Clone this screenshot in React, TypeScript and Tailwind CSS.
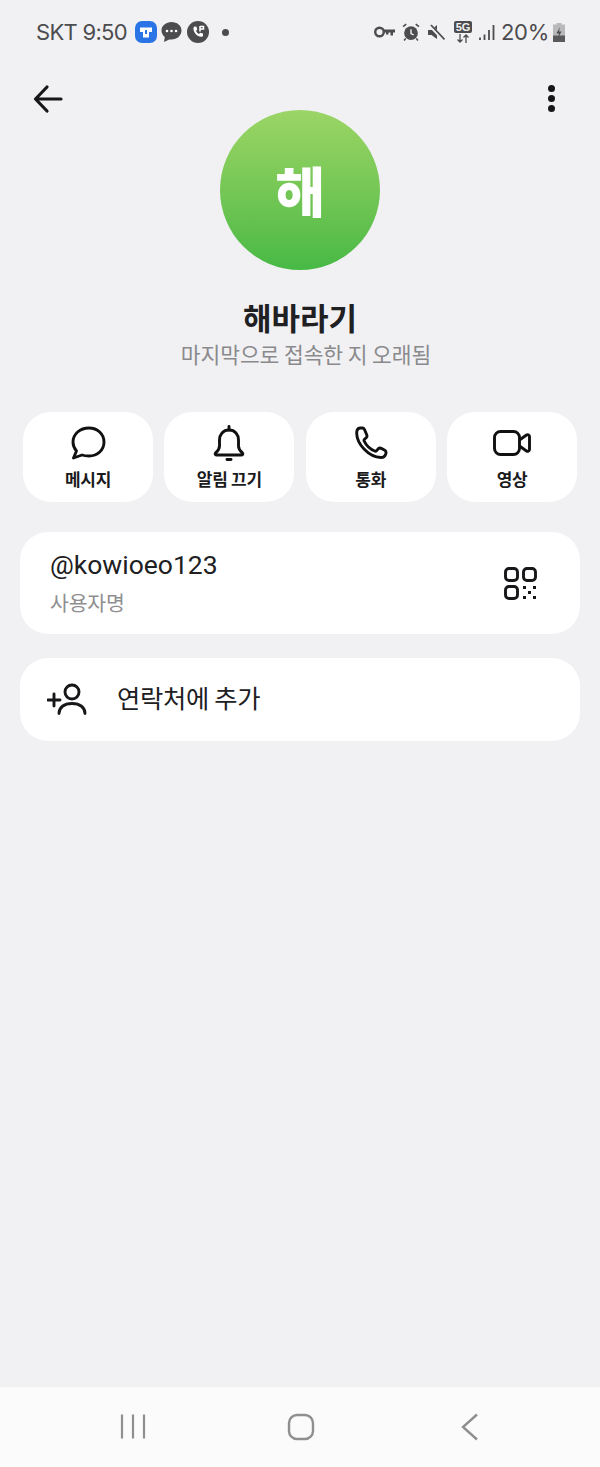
import { ReactNode } from "react";

const korean = "font-['Noto_Sans_CJK_KR','Noto_Sans',sans-serif]";

function ActionButton({ icon, label }: { icon: ReactNode; label: string }) {
    return (
        <div className="flex h-[90px] w-[130px] flex-col items-center rounded-[28px] bg-white pt-[13px]">
            <div className="flex h-[36px] items-center justify-center">{icon}</div>
            <span className="mt-[6px] text-[17px] leading-[24px] font-bold tracking-[-0.3px] text-[#1b1b1d]">
                {label}
            </span>
        </div>
    );
}

function StatusBar() {
    return (
        <div className="flex h-[64px] items-center justify-between pr-[35px] pl-[36px] text-[#4c4c4e]">
            <div className="flex items-center">
                <span className="font-['Inter',sans-serif] text-[22px] leading-none tracking-[-0.7px]">
                    SKT 9:50
                </span>
                <svg width="22" height="22" viewBox="0 0 22 22" className="ml-[8px]">
                    <rect x="0" y="0" width="22" height="22" rx="7" fill="#2b74e6" />
                    <path d="M5 6.500h12v4.500h-3v5.500h-6V11H5z" fill="#fff" />
                    <rect x="10" y="9" width="2" height="4" fill="#2b74e6" />
                </svg>
                <svg width="21" height="22" viewBox="0 0 21 22" className="ml-[4px]">
                    <path
                        d="M10.500 1C5 1 .5 4.600.5 9.500c0 2.600 1.300 4.900 3.300 6.400L3 21l5.200-2.600c.7.100 1.500.2 2.300.1 5.500 0 10-4 10-9S16 1 10.500 1z"
                        fill="#4c4c4e"
                    />
                    <circle cx="6" cy="10" r="1.300" fill="#fff" />
                    <circle cx="10.500" cy="10" r="1.300" fill="#fff" />
                    <circle cx="15" cy="10" r="1.300" fill="#fff" />
                </svg>
                <svg width="22" height="22" viewBox="0 0 22 22" className="ml-[5px]">
                    <circle cx="11" cy="11" r="11" fill="#4c4c4e" />
                    <path
                        d="M7.500 5.500l2 .2.8 3-1.300 1c.6 1.500 1.700 2.600 3 3.200l1.100-1.200 2.900.9v2.100c-.2.800-1 1.200-1.800 1.100-4.200-.5-7.300-3.700-7.800-8-.1-1.100.7-2.100 1.100-2.300z"
                        fill="#fff"
                    />
                    <path d="M13 5v5.500M13 5.500h3.500v2.500H13" stroke="#fff" strokeWidth="1.500" fill="none" />
                </svg>
                <span className="ml-[13px] h-[7px] w-[7px] rounded-full bg-[#4c4c4e]" />
            </div>
            <div className="flex items-center">
                <svg width="21" height="12" viewBox="0 0 21 12">
                    <circle cx="5.500" cy="6" r="4.300" fill="none" stroke="#4c4c4e" strokeWidth="2.400" />
                    <path d="M9.500 3.500H21v3h-2v3h-2.500v-3h-2v2H12v-2H9.500z" fill="#4c4c4e" />
                </svg>
                <svg width="18" height="18" viewBox="0 0 17 17" className="ml-[7px]">
                    <circle cx="8.500" cy="9.500" r="6.500" fill="#4c4c4e" />
                    <path d="M8.500 6v4l2.500 1.200" stroke="#f1f1f4" strokeWidth="1.300" fill="none" />
                    <path d="M1 3.500L4 1M16 3.500L13 1" stroke="#4c4c4e" strokeWidth="1.500" />
                    <path d="M3.500 14.500L2 16.500M13.500 14.500L15 16.500" stroke="#4c4c4e" strokeWidth="1.500" />
                </svg>
                <svg width="17" height="17" viewBox="0 0 17 17" className="ml-[8px]">
                    <path d="M0 6h3.500L9 1v14L3.500 11H0z" fill="#4c4c4e" />
                    <path d="M2 1.500L16 16" stroke="#f1f1f4" strokeWidth="3.500" />
                    <path d="M3 1L16.500 15.500" stroke="#4c4c4e" strokeWidth="1.800" />
                </svg>
                <div className="ml-[9px] flex flex-col items-center">
                    <div className="flex h-[12px] w-[18px] items-center justify-center rounded-[2px] bg-[#4c4c4e] font-['Liberation_Sans',sans-serif] text-[11px] leading-none font-bold text-[#f1f1f4]">
                        5G
                    </div>
                    <svg width="14" height="9" viewBox="0 0 14 9" className="mt-[1px]">
                        <path
                            d="M4 0v8M1.500 5.500L4 8l2.500-2.500M10 9V1M7.500 3.500L10 1l2.500 2.500"
                            stroke="#4c4c4e"
                            strokeWidth="1.300"
                            fill="none"
                        />
                    </svg>
                </div>
                <svg width="16" height="17" viewBox="0 0 16 17" className="ml-[7px]">
                    <path d="M1 13.500v2.500M5.500 10.500v5.500M10 6v10M14.500 1v15" stroke="#4c4c4e" strokeWidth="1.800" />
                </svg>
                <span className="ml-[6px] font-['Inter',sans-serif] text-[22px] leading-none tracking-[-0.3px]">
                    20%
                </span>
                <svg width="12" height="19" viewBox="0 0 12 19" className="ml-[4px]">
                    <path d="M3.500 0h5v1.500H12V19H0V1.500h3.500z" fill="#b9b9bb" />
                    <path d="M0 12.500h12V19H0z" fill="#5a5a5c" />
                    <path d="M7 4L3.500 10.500h2.500L5 15l3.500-6.500H6z" fill="#4c4c4e" />
                </svg>
            </div>
        </div>
    );
}

function NavBar() {
    return (
        <div className="flex h-[80px] items-start bg-[#fbfbfb] pt-[26px] pl-[120px]">
            <svg width="26" height="26" viewBox="0 0 26 26">
                <path d="M2 1.500v24M13 1.500v24M24 1.500v24" stroke="#8f8f8f" strokeWidth="2.200" />
            </svg>
            <svg width="28" height="28" viewBox="0 0 28 28" className="ml-[141px]">
                <rect x="2" y="2" width="24" height="24" rx="8" fill="none" stroke="#8f8f8f" strokeWidth="2.400" />
            </svg>
            <svg width="18" height="28" viewBox="0 0 18 28" className="ml-[146px]">
                <path d="M16 1.500L2 14l14 12.500" fill="none" stroke="#8f8f8f" strokeWidth="2.400" />
            </svg>
        </div>
    );
}

export default function App() {
    return (
        <div className={`flex h-[1467px] w-[600px] flex-col overflow-hidden bg-[#f1f1f4] ${korean}`}>
            <StatusBar />

            <div className="flex h-[68px] items-center justify-between pr-[45px] pl-[32px]">
                <svg width="32" height="30" viewBox="0 0 32 30" fill="none" stroke="#17171a" strokeWidth="3.200" strokeLinecap="round" strokeLinejoin="round" className="translate-y-[1px]">
                    <path d="M29 15H4M15 3L3.500 15 15 27" />
                </svg>
                <div className="flex flex-col gap-[3px]">
                    <span className="h-[7px] w-[7px] rounded-full bg-[#17171a]" />
                    <span className="h-[7px] w-[7px] rounded-full bg-[#17171a]" />
                    <span className="h-[7px] w-[7px] rounded-full bg-[#17171a]" />
                </div>
            </div>

            <div className="-mt-[22px] flex flex-col items-center">
                <div className="flex h-[160px] w-[160px] items-center justify-center rounded-full bg-gradient-to-b from-[#9bd566] to-[#47b945]">
                    <span className="text-[54px] leading-none font-black text-white">해</span>
                </div>
                <h1 className="mt-[26px] text-[31px] leading-[42px] font-bold tracking-[0px] text-[#202022]">
                    해바라기
                </h1>
                <p className="mt-[1px] pl-[12px] text-[21.500px] leading-[30px] tracking-[-0.100px] text-[#8a8a8c]">
                    마지막으로 접속한 지 오래됨
                </p>
            </div>

            <div className="mt-[43px] flex justify-between px-[23px]">
                <ActionButton
                    label="메시지"
                    icon={
                        <svg width="36" height="34" viewBox="0 0 36 34" fill="none" stroke="#111" strokeWidth="2.900" strokeLinejoin="round">
                            <path d="M19 2C10 2 3 8 3 16c0 3.500 1.300 6.500 3.500 9L3.500 32l8.500-3c2 .7 4.500 1 7 1 8.500 0 15-6 15-14S27.500 2 19 2z" />
                        </svg>
                    }
                />
                <ActionButton
                    label="알림 끄기"
                    icon={
                        <svg width="32" height="36" viewBox="0 0 32 36" fill="none" stroke="#111" strokeWidth="2.900" strokeLinejoin="round">
                            <path d="M16 5c-6 0-9.500 4.500-9.500 10v6c0 3-1.500 5-4 7-.7.700-.3 2 .8 2h25.400c1.100 0 1.500-1.300.8-2-2.500-2-4-4-4-7v-6C25.500 9.500 22 5 16 5z" />
                            <path d="M16 1.500V5" strokeLinecap="round" />
                            <path d="M14 34.500h4" strokeLinecap="round" />
                        </svg>
                    }
                />
                <ActionButton
                    label="통화"
                    icon={
                        <svg width="34" height="34" viewBox="0 0 34 34" fill="none" stroke="#111" strokeWidth="2.900" strokeLinejoin="round">
                            <path d="M3 4.500C3.500 3 5 2 6.500 2h1.800c1 0 1.800.6 2.200 1.500l2.300 5.500c.4 1 .1 2-.6 2.700l-1.700 1.600c-.5.5-.6 1.200-.3 1.800 2.300 4.700 5.800 8 10.500 9.900.7.300 1.400.1 1.900-.4l1.600-1.700c.8-.8 2-1 3-.5l3.200 1.600c1.300.7 1.900 2.200 1.500 3.600-.6 2.300-2.700 3.900-5 3.900C14.500 31 3 18 2.700 7.500c0-1 .1-2 .3-3z" />
                        </svg>
                    }
                />
                <ActionButton
                    label="영상"
                    icon={
                        <svg width="38" height="26" viewBox="0 0 38 26" fill="none" stroke="#111" strokeWidth="2.900" strokeLinejoin="round">
                            <rect x="1.500" y="1.500" width="25" height="23" rx="6" />
                            <path d="M26.500 10l7-5c1-.7 3-.2 3 1.500v13c0 1.700-2 2.200-3 1.500l-7-5" />
                        </svg>
                    }
                />
            </div>

            <div className="mx-[20px] mt-[30px] flex h-[102px] items-center justify-between rounded-[28px] bg-white pr-[43px] pl-[30px]">
                <div className="flex -translate-y-[1px] flex-col">
                    <span className="-mt-[1px] font-['Roboto',sans-serif] text-[26.500px] leading-[36px] text-[#202022]">
                        @kowioeo123
                    </span>
                    <span className="mt-[5px] text-[20.500px] leading-[28px] tracking-[-0.2px] text-[#8f8f91]">
                        사용자명
                    </span>
                </div>
                <svg width="33" height="33" viewBox="0 0 33 33" fill="none" stroke="#17171a" strokeWidth="2.900">
                    <rect x="1.500" y="1.500" width="12" height="12" rx="3.500" />
                    <rect x="19.500" y="1.500" width="12" height="12" rx="3.500" />
                    <rect x="1.500" y="19.500" width="12" height="12" rx="3.500" />
                    <g fill="#17171a" stroke="none">
                        <rect x="19" y="19" width="3" height="3" />
                        <rect x="29" y="19" width="3" height="3" />
                        <rect x="24" y="24" width="3" height="3" />
                        <rect x="19" y="29" width="3" height="3" />
                        <rect x="29" y="29" width="3" height="3" />
                    </g>
                </svg>
            </div>

            <div className="mx-[20px] mt-[24px] flex h-[83px] items-center rounded-[28px] bg-white pl-[27px]">
                <svg width="40" height="32" viewBox="0 0 40 32" fill="none" stroke="#17171a" strokeWidth="2.900" strokeLinecap="round" className="-translate-y-[1px]">
                    <circle cx="25" cy="9" r="7" />
                    <path d="M12 30.500c0-6 5-10 13-10s13 4 13 10" />
                    <path d="M1 17h12M7 11v12" />
                </svg>
                <span className="ml-[30px] -translate-y-[3px] text-[25.300px] leading-[36px] tracking-[-0.3px] text-[#202022]">
                    연락처에 추가
                </span>
            </div>

            <div className="flex-1" />
            <NavBar />
        </div>
    );
}
